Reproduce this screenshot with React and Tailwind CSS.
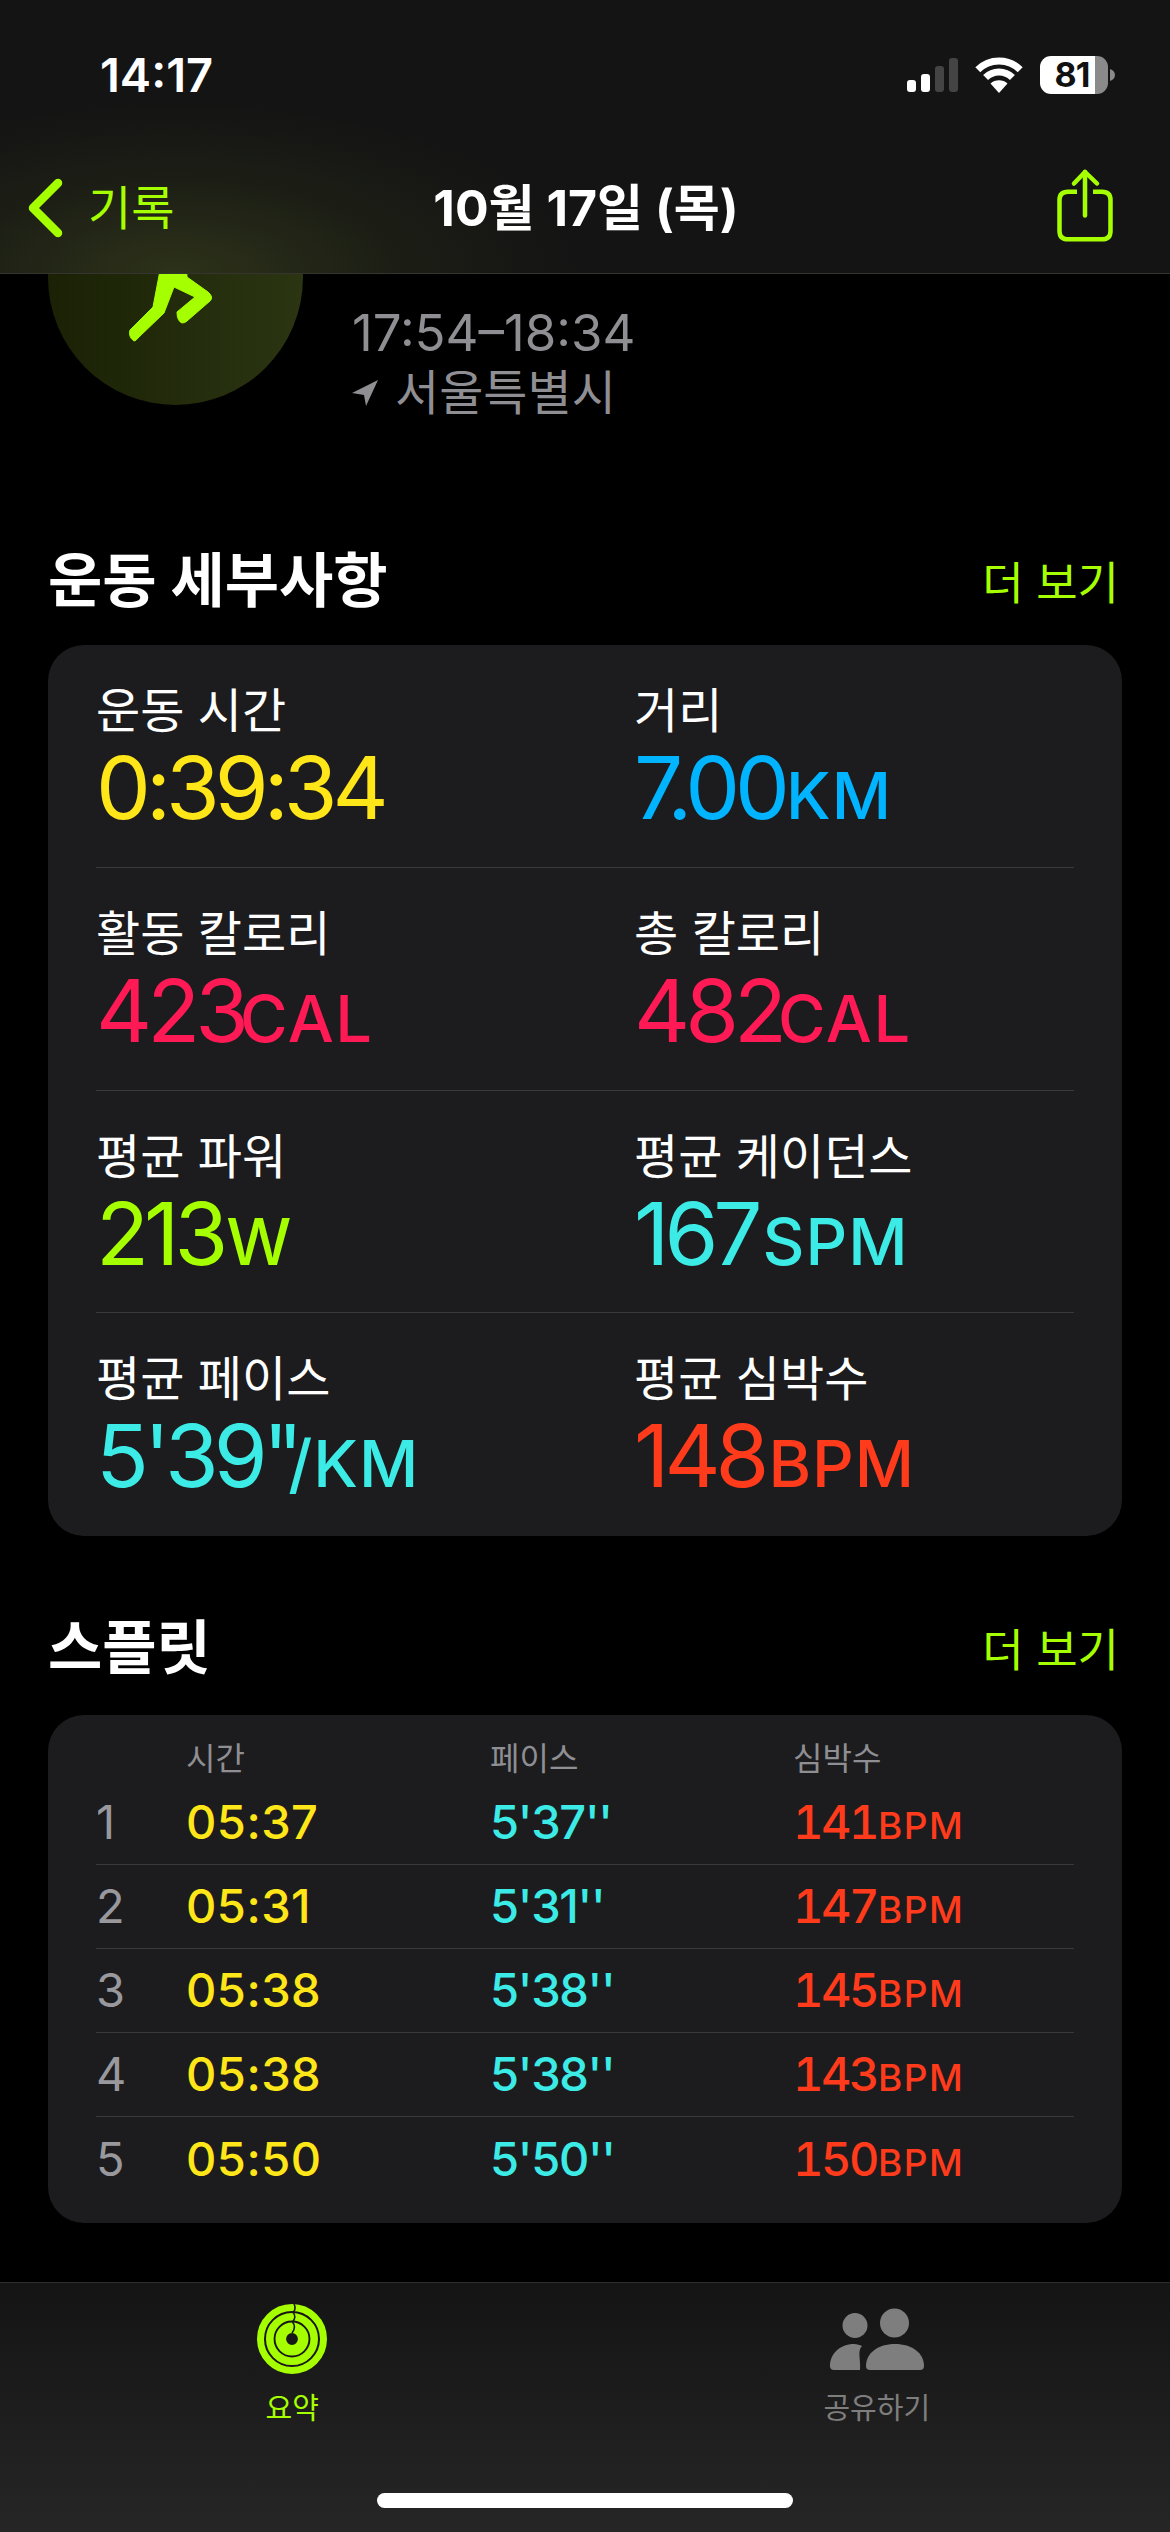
import React from "react";

const Metric = ({ label, value, unit, color, unitClass }) => (
  <div className="flex flex-col pt-[38px]">
    <div className="h-[56px] text-[48px] leading-[56px] text-white">{label}</div>
    <div className={`mt-[4px] h-[90px] whitespace-nowrap leading-[90px] ${color}`}>
      <span className="text-[87px] tracking-[-5px]">{value}</span>
      {unit ? <span className={`text-[65px] font-medium ${unitClass}`}>{unit}</span> : null}
    </div>
  </div>
);

const Section = ({ title }) => (
  <div className="flex h-[70px] items-center justify-between">
    <span className="text-[59px] font-bold leading-[70px] text-white">{title}</span>
    <span className="mr-[3px] mt-[6px] text-[45px] leading-[70px] text-[#a6ff00]">더 보기</span>
  </div>
);

const metrics = [
  [
    { label: "운동 시간", value: "0:39:34", color: "text-[#ffe619]" },
    { label: "거리", value: "7.00", unit: "KM", color: "text-[#00b4ff]", unitClass: "ml-[1px] tracking-[1px]" },
  ],
  [
    { label: "활동 칼로리", value: "423", unit: "CAL", color: "text-[#ff1a55]", unitClass: "-ml-[4px] tracking-[1.5px]" },
    { label: "총 칼로리", value: "482", unit: "CAL", color: "text-[#ff1a55]", unitClass: "-ml-[4px] tracking-[1.5px]" },
  ],
  [
    { label: "평균 파워", value: "213", unit: "W", color: "text-[#a6ff00]", unitClass: "ml-[3px] tracking-[1px]" },
    { label: "평균 케이던스", value: "167", unit: "SPM", color: "text-[#3cebe6]", unitClass: "ml-[5px] tracking-[1px]" },
  ],
  [
    { label: "평균 페이스", value: "5'39\"", unit: "/KM", color: "text-[#3cebe6]", unitClass: "-ml-[10px] tracking-[1px]" },
    { label: "평균 심박수", value: "148", unit: "BPM", color: "text-[#ff3b1c]", unitClass: "ml-[4px] tracking-[1px]" },
  ],
];

const splits = [
  ["1", "05:37", "5'37''", "141"],
  ["2", "05:31", "5'31''", "147"],
  ["3", "05:38", "5'38''", "145"],
  ["4", "05:38", "5'38''", "143"],
  ["5", "05:50", "5'50''", "150"],
];

const Wifi = () => (
  <svg width="48" height="36" viewBox="0 0 48 36" fill="none" stroke="white" strokeWidth="7">
    <path d="M2.8 12.8A30 30 0 0 1 45.2 12.8" />
    <path d="M10.6 20.6A19 19 0 0 1 37.4 20.6" />
    <path d="M24 36L15.5 26.5A13 13 0 0 1 32.5 26.5Z" fill="white" stroke="none" />
  </svg>
);

const Signal = () => (
  <div className="flex items-end gap-[5px]">
    <div className="h-[12px] w-[9px] rounded-[3px] bg-white" />
    <div className="h-[18px] w-[9px] rounded-[3px] bg-white" />
    <div className="h-[26px] w-[9px] rounded-[3px] bg-[#444444]" />
    <div className="h-[34px] w-[9px] rounded-[3px] bg-[#444444]" />
  </div>
);

const Battery = () => (
  <div className="flex items-center gap-[2px]">
    <div className="flex h-[38px] w-[68px] items-center justify-center rounded-[11px] bg-[linear-gradient(to_right,#ffffff_81%,#8a8a8a_81%)] pr-[4px] text-[34px] font-bold leading-none tracking-[-1px] text-[#111111]">
      81
    </div>
    <svg width="5" height="12" viewBox="0 0 5 12">
      <path d="M0 0C3 1 5 3 5 6C5 9 3 11 0 12Z" fill="#8a8a8a" />
    </svg>
  </div>
);

const ShareIcon = () => (
  <svg width="60" height="76" viewBox="0 0 60 76" fill="none" stroke="#a6ff00" strokeWidth="4.5" strokeLinecap="round" strokeLinejoin="round">
    <path d="M24 24.700H15Q6.500 24.700 6.500 33V64Q6.500 72.300 15 72.300H49Q57.500 72.300 57.500 64V33Q57.500 24.700 49 24.700H40" strokeLinecap="butt" />
    <path d="M32 48.500V5" />
    <path d="M21 16.500L32 5L44 16.500" />
  </svg>
);

const Rings = () => (
  <svg width="70" height="70" viewBox="0 0 70 70" fill="none">
    <circle cx="35" cy="35" r="31.5" stroke="#a6ff00" strokeWidth="7" />
    <circle cx="35" cy="35" r="22.2" stroke="#a6ff00" strokeWidth="7.6" />
    <circle cx="35" cy="35" r="11.2" stroke="#a6ff00" strokeWidth="10.6" />
    <path d="M37 0C38.500 3 38.500 6 36 8.500C38.500 11 38.500 15 35.500 18C38 21 38 25 35 29" stroke="#191919" strokeWidth="1.600" />
  </svg>
);

const People = () => (
  <svg width="94" height="62" viewBox="0 0 94 62" fill="#7e7e7e">
    <circle cx="25" cy="17.500" r="12.500" />
    <circle cx="64.500" cy="15" r="14.500" />
    <path d="M36 58C36 45 48 36 65 36C82 36 94 45 94 58Q94 62 90 62H40Q36 62 36 58Z" />
    <path d="M0 58C0 46 10 36 24 36C27 36 30 37 32 38C27 43 31 52 30 62H4Q0 62 0 58Z" />
  </svg>
);

export default function App() {
  return (
    <div className="flex h-[2532px] w-[1170px] flex-col overflow-hidden bg-black font-['Inter','Noto_Sans_CJK_KR',sans-serif]">
      <header className="relative z-10 h-[274px] shrink-0 border-b border-[#33352e] bg-[#141414] bg-[radial-gradient(ellipse_400px_170px_at_176px_273px,#2d3219_0%,#1c1e15_55%,#141414_100%)]">
        <div className="flex h-[150px] items-center justify-between pb-[1px] pl-[100px] pr-[55px]">
          <span className="text-[47px] font-semibold leading-none text-white">14:17</span>
          <div className="flex items-center gap-[17px]">
            <Signal />
            <Wifi />
            <Battery />
          </div>
        </div>
        <div className="grid h-[123px] grid-cols-[1fr_auto_1fr] items-center pb-[8px] pl-[58px] pr-[56px]">
          <div className="-ml-[30px] flex items-center gap-[25px]">
            <svg width="35" height="60" viewBox="0 0 35 60" fill="none" stroke="#a6ff00" strokeWidth="8.500" strokeLinecap="round" strokeLinejoin="round">
              <path d="M30 5L5 30L30 55" />
            </svg>
            <span className="text-[47px] leading-none text-[#a6ff00]">기록</span>
          </div>
          <span className="text-[50px] font-bold leading-none text-white">10월 17일 (목)</span>
          <div className="mr-[1px] flex justify-end pb-[6px]">
            <ShareIcon />
          </div>
        </div>
      </header>

      <main className="min-h-0 flex-1 overflow-hidden px-[48px]">
        <div className="flex items-start gap-[49px]">
          <div className="-mt-[124px] flex h-[255px] w-[255px] shrink-0 rounded-full bg-[linear-gradient(90deg,#1a2105,#2b3512)]">
            <svg width="255" height="255" viewBox="0 0 255 255" fill="#a6ff00" stroke="#a6ff00" strokeWidth="1" strokeLinejoin="round">
              <path d="M114 110L105 157L82 180Q80 187 86 191Q88 191 90 188L116 163L126 137L147 147L129 162Q129 171 134 173Q137 173 139 171L162 151Q166 147 160 142L139 127L138 110Z" />
            </svg>
          </div>
          <div className="flex flex-col pt-[29px]">
            <span className="h-[60px] text-[51px] leading-[60px] text-[#8e8e93]">17:54–18:34</span>
            <div className="flex h-[60px] items-center gap-[17px] text-[48px] leading-[60px] text-[#8e8e93]">
              <svg width="26" height="26" viewBox="0 0 26 26" fill="#8e8e93">
                <path d="M26 0L0 13L12 15L14 26Z" />
              </svg>
              <span>서울특별시</span>
            </div>
          </div>
        </div>

        <div className="mt-[123px]">
          <Section title="운동 세부사항" />
        </div>
        <div className="mt-[29px] rounded-[36px] bg-[#1c1c1e] px-[48px]">
          {metrics.map((row, i) => (
            <div
              key={row[0].label}
              className={`grid h-[222.75px] grid-cols-[538px_1fr] ${i < 3 ? "border-b border-[#3a3a3c]" : ""}`}
            >
              <Metric {...row[0]} />
              <Metric {...row[1]} />
            </div>
          ))}
        </div>

        <div className="mt-[77px]">
          <Section title="스플릿" />
        </div>
        <div className="mt-[32px] rounded-[36px] bg-[#1c1c1e] px-[48px] pb-[22px]">
          <div className="grid h-[66px] grid-cols-[90px_304px_303px_1fr] items-end pb-[4px] text-[32px] leading-[36px] text-[#8e8e93]">
            <span />
            <span>시간</span>
            <span>페이스</span>
            <span>심박수</span>
          </div>
          {splits.map((s, i) => (
            <div
              key={s[0]}
              className={`grid h-[84px] grid-cols-[90px_304px_303px_1fr] items-center ${i < 4 ? "border-b border-[#3a3a3c]" : ""}`}
            >
              <span className="text-[47px] text-[#98989d]">{s[0]}</span>
              <span className="text-[47px] font-medium tracking-[0.5px] text-[#ffe619]">{s[1]}</span>
              <span className="text-[47px] font-medium tracking-[-1.3px] text-[#3cebe6]">{s[2]}</span>
              <span className="whitespace-nowrap font-medium text-[#ff3b1c]">
                <span className="text-[47px] tracking-[-2.5px] tabular-nums">{s[3]}</span>
                <span className="ml-[1px] text-[37px] tracking-[1.5px]">BPM</span>
              </span>
            </div>
          ))}
        </div>
      </main>

      <nav className="relative flex h-[250px] shrink-0 flex-col border-t border-[#2e2e2e] bg-[linear-gradient(180deg,#141414,#262626)]">
        <div className="grid grid-cols-2 pr-[1px] pt-[21px]">
          <div className="flex flex-col items-center">
            <div className="flex h-[70px] items-center">
              <Rings />
            </div>
            <span className="mt-[15px] text-[29px] leading-[40px] text-[#a6ff00]">요약</span>
          </div>
          <div className="flex flex-col items-center">
            <div className="flex h-[70px] items-center">
              <People />
            </div>
            <span className="mt-[15px] text-[29px] leading-[40px] text-[#7e7e7e]">공유하기</span>
          </div>
        </div>
        <div className="mx-auto mt-[64px] h-[15px] w-[416px] rounded-full bg-white" />
      </nav>
    </div>
  );
}
